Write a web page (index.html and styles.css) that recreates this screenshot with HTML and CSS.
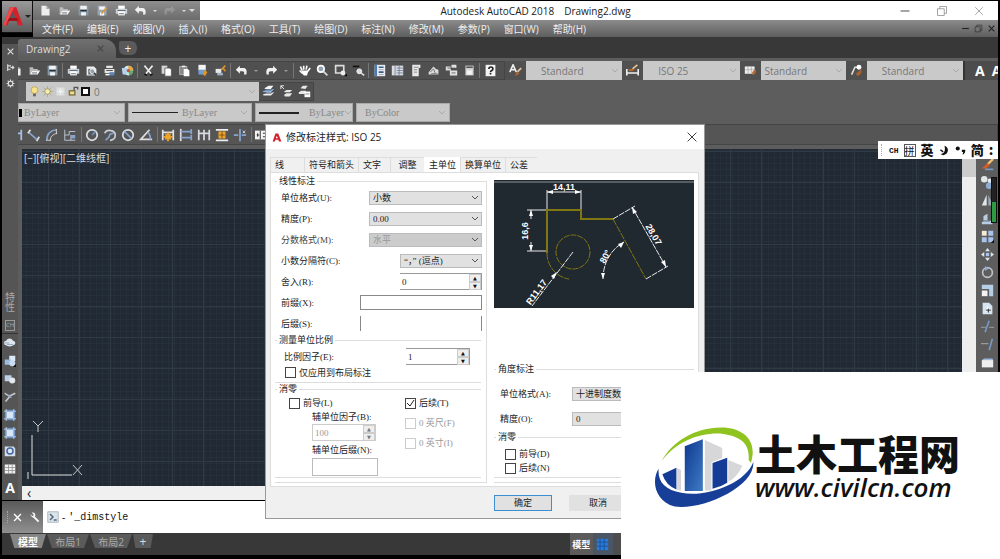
FILE: index.html
```html
<!DOCTYPE html>
<html lang="zh-CN">
<head>
    <meta charset="UTF-8">
    <meta name="viewport" content="width=device-width, initial-scale=1.0">
    <title>Autodesk AutoCAD 2018 Drawing2.dwg</title>
    <link rel="stylesheet" href="styles.css">
</head>
<body>

<!-- Icon set -->
<svg class="sprite" aria-hidden="true">
    <symbol id="new" viewBox="0 0 16 16"><path d="M3 2h6l4 4v8H3z" fill="#eee"/><path d="M9 2v4h4" fill="#aaa"/></symbol>
    <symbol id="open" viewBox="0 0 16 16"><path d="M2 4h4l1 2h5v2H5l-3 5z" fill="#bbb"/><path d="M5 8h10l-3 5H2z" fill="#f0f0f0"/><path d="M5 11h6" stroke="#4c5a66"/></symbol>
    <symbol id="save" viewBox="0 0 16 16"><path d="M2 2h12v12H2z" fill="#8798a8"/><path d="M4 2h8v5H4zM5 10h6v4H5z" fill="#f2f2f2"/><path d="M4 8h8" stroke="#28323c" stroke-width="2"/></symbol>
    <symbol id="saveas" viewBox="0 0 16 16"><path d="M2 2h11v12H2z" fill="#9ba6b2"/><path d="M4 3h7v4H4zM5 10h5v4H5z" fill="#f5f5f5"/><path d="M14 5l-6 7-2 1 1-3 5-6z" fill="#d99a3c"/></symbol>
    <symbol id="print" viewBox="0 0 16 16"><path d="M4 2h8v4H4z" fill="#fff"/><path d="M1 6h14v6H1z" fill="#ccd2d8"/><path d="M4 9h8v5H4z" fill="#fff"/><path d="M3 8h10M5 12h6" stroke="#475560"/></symbol>
    <symbol id="preview" viewBox="0 0 16 16"><path d="M2 3h9l3 3v8H2z" fill="#eee"/><path d="M4 6h7v7H4z" fill="#667078"/><circle cx="9" cy="9" r="3" fill="#8fa0ae" stroke="#fff"/><path d="M11 11l3 3" stroke="#333" stroke-width="2"/></symbol>
    <symbol id="publish" viewBox="0 0 16 16"><path d="M4 2h8v3H4zM2 6h12v5H2z" fill="#e6e6e6"/><path d="M4 8h8" stroke="#333"/><path d="M8 10h6v4H8z" fill="#6389b8"/><path d="M3 12h5v2H3z" fill="#fff"/></symbol>
    <symbol id="web" viewBox="0 0 16 16"><circle cx="9" cy="8" r="6" fill="#dbe9f5"/><path d="M9 2a6 6 0 0 1 6 6H9z" fill="#e6a83d"/><path d="M9 8h6a6 6 0 0 1-5 6z" fill="#5bab65"/><path d="M1 5h7v8H2z" fill="#b3d3ec"/><circle cx="9" cy="8" r="2" fill="#c84b3a"/></symbol>
    <symbol id="cut" viewBox="0 0 16 16"><path d="M3 2l9 11M13 2L4 13" stroke="#e9e9e9" stroke-width="2"/><path d="M3 12l3 2M10 14l3-2" stroke="#111" stroke-width="2"/></symbol>
    <symbol id="copy" viewBox="0 0 16 16"><path d="M2 2h7v10H2z" fill="#d5d5d5"/><path d="M6 5h6l2 2v8H6z" fill="#fff" stroke="#555"/></symbol>
    <symbol id="paste" viewBox="0 0 16 16"><path d="M2 3h9v10H2z" fill="#888" stroke="#bbb"/><path d="M5 2h4v2H5z" fill="#eee"/><path d="M7 6h5l2 2v7H7z" fill="#fff"/></symbol>
    <symbol id="match" viewBox="0 0 16 16"><path d="M3 1h9v7H3z" fill="#f3f3f3"/><path d="M3 7h9v6H3z" fill="#6f9ed0"/><path d="M11 7l3 3-3 5-3-3z" fill="#e09428"/></symbol>
    <symbol id="block" viewBox="0 0 16 16"><path d="M2 6h7v5H2z" fill="#e8e8e8"/><path d="M4 11h7v3H4z" fill="#9fb2c5"/><path d="M9 7l5-5M11 5l3 4" stroke="#d98f2b" stroke-width="2"/></symbol>
    <symbol id="undo" viewBox="0 0 16 16"><path d="M1 7l5-5v3h4c4 0 5 3 4 8h-3c1-3 0-4-2-4H6v3z" fill="#f0f0f0"/></symbol>
    <symbol id="redo" viewBox="0 0 16 16"><path d="M15 7l-5-5v3H6c-4 0-5 3-4 8h3c-1-3 0-4 2-4h3v3z" fill="#f0f0f0"/></symbol>
    <symbol id="hand" viewBox="0 0 16 16"><path d="M5 8L3 3M7 7V2M10 7l1-5M12 9l3-4M2 8l4 4" stroke="#fff" stroke-width="2"/><path d="M4 8h9l-2 6H7z" fill="#fff"/></symbol>
    <symbol id="zoom" viewBox="0 0 16 16"><circle cx="6" cy="6" r="4" fill="#8fa3b5" stroke="#fff" stroke-width="2"/><path d="M9 9l5 5" stroke="#ddd" stroke-width="2"/></symbol>
    <symbol id="zoomwin" viewBox="0 0 16 16"><path d="M2 2h10v9H2z" fill="none" stroke="#ddd" stroke-width="2"/><circle cx="11" cy="11" r="3" fill="#e9eef2"/><path d="M13 15h3v-3z" fill="#000"/></symbol>
    <symbol id="zoomprev" viewBox="0 0 16 16"><path d="M1 3h8" stroke="#111" stroke-width="2"/><circle cx="9" cy="9" r="3" fill="#d5dde3" stroke="#fff"/><path d="M11 11l4 3" stroke="#ddd" stroke-width="2"/></symbol>
    <symbol id="props" viewBox="0 0 16 16"><path d="M2 1h13v14H2z" fill="#e8edf4"/><path d="M2 1h3v14H2z" fill="#4b79b6"/><path d="M7 4h6M7 10h6" stroke="#3b5a84" stroke-width="2"/><path d="M7 7h6M7 13h6" stroke="#999"/></symbol>
    <symbol id="center" viewBox="0 0 16 16"><path d="M1 2h14v12H1z" fill="#d9dde2"/><path d="M5 2v12M10 2v12M7 5h8M7 8h8M7 11h8" stroke="#6c7a90"/></symbol>
    <symbol id="palette" viewBox="0 0 16 16"><path d="M4 1h10v4h-2v10H4z" fill="#e8e8e8"/><path d="M6 4h6M6 7h4M6 10h4" stroke="#777"/></symbol>
    <symbol id="sheet" viewBox="0 0 16 16"><path d="M2 10l6-7 3 3 3 1v6H2z" fill="#ddd"/><path d="M4 10l4-4 2 5M5 12h8" stroke="#5a6066" fill="none"/></symbol>
    <symbol id="markup" viewBox="0 0 16 16"><path d="M1 3h6v5H1zM8 1h6v4H8zM6 8h9v6H6z" fill="#e2e2e2"/><path d="M3 5h10M8 11h5M4 8v4" stroke="#555"/></symbol>
    <symbol id="calc" viewBox="0 0 16 16"><path d="M3 2h10v12H3z" fill="#d6d6d6"/><path d="M4 4h8" stroke="#555" stroke-width="2"/><path d="M5 8h6v5H5z" fill="#f3f3f3"/></symbol>
    <symbol id="help" viewBox="0 0 16 16"><path d="M2 1h12v14H2z" fill="#f4f4f4"/><path d="M6 6c0-3 5-3 5 0 0 2-3 2-3 4M8 11v2" stroke="#222" stroke-width="2" fill="none"/></symbol>
    <symbol id="astyle" viewBox="0 0 16 16"><path d="M1 10L5 1l4 9M3 7h5" stroke="#eee" stroke-width="2" fill="none"/><path d="M15 5l-5 5" stroke="#e8c89a" stroke-width="2"/><path d="M10 9l3 3-6 3z" fill="#b4662a"/></symbol>
    <symbol id="dstyle" viewBox="0 0 16 16"><path d="M1 6v8M15 6v8M1 11h14" stroke="#eee" stroke-width="2"/><path d="M14 1L8 6" stroke="#e5c391" stroke-width="2"/><path d="M3 6h8l-3 3H4z" fill="#b4662a"/></symbol>
    <symbol id="tstyle" viewBox="0 0 16 16"><path d="M1 3h12v9H1z" fill="#f0f0f0"/><path d="M1 7h12M5 3v9M9 3v9" stroke="#aaa"/><path d="M14 6l-4 4 1 4 4-4z" fill="#b4662a"/></symbol>
    <symbol id="mstyle" viewBox="0 0 16 16"><path d="M2 13l4-9h4" stroke="#ddd" stroke-width="2" fill="none"/><circle cx="11" cy="4" r="3" fill="#fff"/><path d="M14 6l-7 6 3 3 4-4z" fill="#a9622f"/></symbol>
    <symbol id="bulb" viewBox="0 0 16 16"><circle cx="8" cy="6" r="5" fill="#f7e289" stroke="#b39b36"/><path d="M6 11h4v4H6z" fill="#666"/></symbol>
    <symbol id="sun" viewBox="0 0 16 16"><path d="M8 0v16M0 8h16M2 2l12 12M14 2L2 14" stroke="#a6a27a"/><circle cx="8" cy="8" r="4" fill="#f7edab" stroke="#8d8543"/></symbol>
    <symbol id="frost" viewBox="0 0 16 16"><path d="M2 2h12v12H2z" fill="#dcdcdc"/><path d="M8 3v10M3 8h10M5 5l6 6M11 5l-6 6" stroke="#f4f6f7"/></symbol>
    <symbol id="lock" viewBox="0 0 16 16"><path d="M1 6h10v8H1z" fill="#7d733b"/><path d="M3 8h6v4H3z" fill="#e9dd98"/><path d="M9 6V2h5v3" stroke="#555" fill="none" stroke-width="2"/></symbol>
    <symbol id="layers" viewBox="0 0 16 16"><path d="M1 12l5-3h9l-4 4H2z" fill="#eee"/><path d="M1 8l5-3h9l-4 4H2z" fill="#8fb2dd"/><path d="M3 4l5-3h6l-3 4H4z" fill="#f4f4f4"/><path d="M2 10h9l4-3M2 6h9l4-3" stroke="#3e4a5a" fill="none"/></symbol>
    <symbol id="layerprev" viewBox="0 0 16 16"><path d="M1 1l4 4M1 5V1h4" stroke="#fff" fill="none"/><path d="M5 8l3-2h7l-3 3H6zM5 12l3-2h7l-3 4H6z" fill="#e8e8e8"/></symbol>
    <symbol id="layerstate" viewBox="0 0 16 16"><path d="M1 9l3-2h6l-2 4H1zM3 4l3-3h6l-3 4z" fill="#e8e8e8"/><path d="M8 8h7v7H8z" fill="#fff"/><path d="M9 11h5" stroke="#777"/></symbol>
    <symbol id="dlinear" viewBox="0 0 16 16"><path d="M2 2v12M14 2v12M2 6h12" stroke="#a9bfe0" stroke-width="2"/></symbol>
    <symbol id="dalign" viewBox="0 0 16 16"><path d="M2 5l9 8" stroke="#86a3d0" stroke-width="2"/><path d="M4 2L1 6M14 10l-3 5" stroke="#ddd" stroke-width="2"/></symbol>
    <symbol id="darc" viewBox="0 0 16 16"><path d="M2 14C2 7 6 3 13 2" stroke="#86a3d0" stroke-width="2" fill="none"/><path d="M6 14c0-4 3-7 8-8M1 14h6M13 1v6" stroke="#ddd" fill="none"/></symbol>
    <symbol id="dord" viewBox="0 0 16 16"><path d="M2 2v12h12M2 8h5V4h7M9 8v6" stroke="#c6cfdd" stroke-width="1" fill="none"/><path d="M9 8h5v4H9z" fill="#86a3d0"/></symbol>
    <symbol id="dradius" viewBox="0 0 16 16"><circle cx="8" cy="8" r="6" fill="none" stroke="#d9dde2" stroke-width="2"/><path d="M8 8l4-4" stroke="#6f8fc2" stroke-width="2"/></symbol>
    <symbol id="djog" viewBox="0 0 16 16"><path d="M2 6c2-5 12-4 12 2 0 4-3 6-6 6" stroke="#c9ced6" stroke-width="2" fill="none"/><path d="M3 14l4-4 1-3 4-1" stroke="#86a3d0" stroke-width="2" fill="none"/></symbol>
    <symbol id="ddia" viewBox="0 0 16 16"><circle cx="8" cy="8" r="6" fill="none" stroke="#d9dde2" stroke-width="2"/><path d="M4 4l8 8" stroke="#86a3d0" stroke-width="2"/></symbol>
    <symbol id="dang" viewBox="0 0 16 16"><path d="M12 2L2 13h13" stroke="#ddd" stroke-width="2" fill="none"/><path d="M10 5c3 2 3 5 3 8" stroke="#86a3d0" stroke-width="2" fill="none"/></symbol>
    <symbol id="dquick" viewBox="0 0 16 16"><path d="M2 2v12M14 2v12M2 5h12" stroke="#e1e1e1" stroke-width="2"/><path d="M8 5v10M3 10h10M5 7l6 6M11 7l-6 6" stroke="#f0a528" stroke-width="2"/></symbol>
    <symbol id="dbase" viewBox="0 0 16 16"><path d="M2 1v14" stroke="#ddd" stroke-width="2"/><path d="M2 4h12M2 11h12M14 1v6M14 8v6" stroke="#86a3d0" stroke-width="2"/></symbol>
    <symbol id="dcont" viewBox="0 0 16 16"><path d="M2 2v12M8 2v12M14 2v12M2 6h12" stroke="#d6d9de" stroke-width="2"/></symbol>
    <symbol id="dspace" viewBox="0 0 16 16"><path d="M1 2h14M1 14h14" stroke="#eee" stroke-width="2"/><path d="M4 4h8v8H4z" fill="#f0a528"/><path d="M8 4v8M5 8h6" stroke="#744a10"/></symbol>
    <symbol id="dbreak" viewBox="0 0 16 16"><path d="M8 1v14M1 8h5M10 8h5" stroke="#86a3d0" stroke-width="2"/><path d="M11 3l3 3M14 3l-3 3" stroke="#ddd"/></symbol>
    <symbol id="dtol" viewBox="0 0 16 16"><path d="M0 3h16v10H0z" fill="#f3f3f3"/><path d="M6 3v10M2 8h3M3 6v4M9 6h6M9 10h6" stroke="#222"/></symbol>
    <symbol id="cloud" viewBox="0 0 16 16"><path d="M3 11a3 3 0 0 1 0-6c2-4 7-4 9 0 4 0 4 6 0 6-1 2-8 2-9 0z" fill="#dfe6ee"/><path d="M1 8h6M4 10h8" stroke="#7d97b8"/></symbol>
    <symbol id="cubes" viewBox="0 0 16 16"><path d="M7 1h8v7H7z" fill="#dbe8f5"/><path d="M1 6h8v7H1z" fill="#9bbbe0"/><circle cx="11" cy="11" r="4" fill="#c9dcf0"/><path d="M12 16h4v-4z" fill="#111"/></symbol>
    <symbol id="shapes" viewBox="0 0 16 16"><path d="M1 3h9v8H1z" fill="#bcd0e6"/><circle cx="11" cy="10" r="4" fill="#e4e8ec"/></symbol>
    <symbol id="spline" viewBox="0 0 16 16"><path d="M1 3l6 4 8-4M8 7l-6 7" stroke="#ccc" stroke-width="2" fill="none"/><path d="M5 5l5 4" stroke="#8da7ce" stroke-width="2"/></symbol>
    <symbol id="region" viewBox="0 0 16 16"><path d="M1 1h14v14H1z" fill="#5a86c4"/><path d="M4 4h8v8H4z" fill="#d7e5f5"/><path d="M3 0v16M13 0v16M0 3h16M0 13h16" stroke="#cfd9e6"/></symbol>
    <symbol id="donut" viewBox="0 0 16 16"><path d="M1 2h12l2 3v10H1z" fill="#d3deea"/><circle cx="8" cy="8" r="4" fill="#dce9f8" stroke="#4566a0" stroke-width="2"/></symbol>
    <symbol id="table" viewBox="0 0 16 16"><path d="M1 2h14v12H1z" fill="#f0f0f0"/><path d="M1 6h14M1 10h14M6 2v12M11 2v12" stroke="#8c8c8c"/></symbol>
    <symbol id="brush" viewBox="0 0 16 16"><path d="M15 1L8 8" stroke="#f1c172" stroke-width="3"/><path d="M8 6l3 3-5 4H1z" fill="#d65b28"/><path d="M5 14h10" stroke="#7d9dc6" stroke-width="2"/></symbol>
    <symbol id="cp" viewBox="0 0 16 16"><circle cx="4" cy="4" r="4" fill="#e3e7eb"/><circle cx="11" cy="6" r="3" fill="#dfe6ee"/><circle cx="10" cy="12" r="4" fill="#8eadd4"/></symbol>
    <symbol id="mirror" viewBox="0 0 16 16"><path d="M7 1v13H1z" fill="#e2e5e8"/><path d="M9 1v13h6z" fill="#9ba6b2"/></symbol>
    <symbol id="offset" viewBox="0 0 16 16"><path d="M3 12V5l5-3v8l6 1v4H1v-3z" fill="#b9cce4"/><path d="M3 11h8" stroke="#455"/></symbol>
    <symbol id="array" viewBox="0 0 16 16"><path d="M1 1h6v6H1z" fill="#f4ead5"/><path d="M9 1h6v6H9zM1 9h6v6H1zM9 9h6v6H9z" fill="#a9c4ec"/><path d="M12 16h4v-4z" fill="#111"/></symbol>
    <symbol id="move" viewBox="0 0 16 16"><path d="M8 0l3 4H5zM8 16l3-4H5zM0 8l4-3v6zM16 8l-4-3v6z" fill="#dde5ee"/><path d="M6 6h4v4H6z" fill="#a9c4ec"/></symbol>
    <symbol id="rotate" viewBox="0 0 16 16"><circle cx="8" cy="8" r="6" fill="none" stroke="#c0c4ca" stroke-width="2"/><path d="M5 0l5 3-5 3z" fill="#8faad4"/></symbol>
    <symbol id="scale" viewBox="0 0 16 16"><path d="M1 1h14v14h-5V6H1z" fill="#b6cfe9"/><path d="M1 8h7v7H1z" fill="#f3f3f3"/></symbol>
    <symbol id="stretch" viewBox="0 0 16 16"><path d="M2 1h8l4 4v10H2z" fill="#d7e4f2"/><path d="M5 13l3-8 3 4" fill="#fff"/><path d="M6 10h6M9 8v5" stroke="#111"/></symbol>
    <symbol id="trim" viewBox="0 0 16 16"><path d="M0 9h6M10 9h6" stroke="#aaa"/><path d="M10 1L5 15" stroke="#7998c5" stroke-width="2"/></symbol>
    <symbol id="extend" viewBox="0 0 16 16"><path d="M0 7h9" stroke="#bbb"/><path d="M14 1l-4 14" stroke="#7998c5" stroke-width="2"/></symbol>
    <symbol id="box" viewBox="0 0 16 16"><path d="M1 5h14v9H1z" fill="#eee"/><path d="M1 5l3-2h10l1 2z" fill="#9bb8dd"/></symbol>
    <symbol id="close" viewBox="0 0 16 16"><path d="M3 3l10 10M13 3L3 13" stroke="currentColor" stroke-width="2"/></symbol>
    <symbol id="closethin" viewBox="0 0 16 16"><path d="M3 3l10 10M13 3L3 13" stroke="currentColor"/></symbol>
    <symbol id="pin" viewBox="0 0 16 16"><path d="M3 2v12M3 5h6M3 11h5M8 8h6M11 5l3 3-3 3" stroke="#ddd" stroke-width="2" fill="none"/></symbol>
    <symbol id="gear" viewBox="0 0 16 16"><circle cx="8" cy="8" r="4" fill="none" stroke="#ddd" stroke-width="2"/><path d="M8 1v3M8 12v3M1 8h3M12 8h3M3 3l2 2M11 11l2 2M13 3l-2 2M5 11l-2 2" stroke="#ddd" stroke-width="2"/></symbol>
    <symbol id="min" viewBox="0 0 16 16"><path d="M2 8h12" stroke="currentColor" stroke-width="2"/></symbol>
    <symbol id="restore" viewBox="0 0 16 16"><path d="M2 5h9v9H2zM5 5V2h9v9h-3" stroke="currentColor" fill="none"/></symbol>
    <symbol id="wrench" viewBox="0 0 16 16"><path d="M6 6l8 8" stroke="#f2f2f2" stroke-width="3"/><path d="M2 3l3 3 2-2-3-3c4-1 6 2 5 5S3 9 2 3z" fill="#f2f2f2"/></symbol>
    <symbol id="prompt" viewBox="0 0 16 16"><path d="M1 1h14v14H1z" fill="#dce3ea" stroke="#9aa6b2"/><path d="M4 4l4 4-4 4M9 12h4" stroke="#56687a" stroke-width="2" fill="none"/></symbol>
    <symbol id="gridon" viewBox="0 0 16 16"><path d="M1 1h14v14H1z" fill="#2b7ad6"/><path d="M1 5h14M1 10h14M5 1v14M10 1v14" stroke="#174c90"/></symbol>
    <symbol id="acad" viewBox="0 0 32 32"><path d="M2 28L11 3h9l9 25h-7l-2-6H10l-2 6z" fill="#d3222b"/><path d="M15 9l-4 9h8z" fill="#55585c"/><path d="M2 28l8-6h13l-2-4H9z" fill="#9d1119"/><path d="M11 3h6L5 28H2z" fill="#ee4a4b"/></symbol>
    <symbol id="acadmark" viewBox="0 0 32 32"><path d="M2 29L11 3h9l10 26h-8l-2-6H11l-2 6z" fill="#d3222b"/><path d="M15 10l-3 8h7z" fill="#fff"/></symbol>
</svg>

<div class="app">
    <header class="top">
        <button class="app-btn" aria-label="应用程序菜单"><svg><use href="#acad"/></svg><i class="caret"></i></button>
        <div class="top-rows">
            <div class="title-row">
                <div class="quick">
                    <button aria-label="新建"><svg><use href="#new"/></svg></button>
                    <button aria-label="打开"><svg><use href="#open"/></svg></button>
                    <button aria-label="保存"><svg><use href="#save"/></svg></button>
                    <button aria-label="另存为"><svg><use href="#saveas"/></svg></button>
                    <button aria-label="打印"><svg><use href="#print"/></svg></button>
                    <button aria-label="放弃"><svg><use href="#undo"/></svg></button>
                    <i class="caret light"></i>
                    <button class="dim" aria-label="重做"><svg><use href="#redo"/></svg></button>
                    <i class="caret light"></i>
                    <i class="caret light big"></i>
                </div>
                <div class="title"><span>Autodesk AutoCAD 2018</span><span>Drawing2.dwg</span></div>
                <div class="win-btns">
                    <button aria-label="最小化"><svg><use href="#min"/></svg></button>
                    <button aria-label="还原"><svg><use href="#restore"/></svg></button>
                    <button aria-label="关闭"><svg><use href="#closethin"/></svg></button>
                </div>
            </div>
            <nav class="menu">
                <a href="#">文件(F)</a><a href="#">编辑(E)</a><a href="#">视图(V)</a><a href="#">插入(I)</a><a href="#">格式(O)</a><a href="#">工具(T)</a><a href="#">绘图(D)</a><a href="#">标注(N)</a><a href="#">修改(M)</a><a href="#">参数(P)</a><a href="#">窗口(W)</a><a href="#">帮助(H)</a>
                <span class="doc-btns">
                    <button aria-label="最小化图形"><svg><use href="#min"/></svg></button>
                    <button aria-label="还原图形"><svg><use href="#restore"/></svg></button>
                    <button aria-label="关闭图形"><svg><use href="#close"/></svg></button>
                </span>
            </nav>
        </div>
    </header>

    <div class="main">
        <aside class="side">
            <div class="side-palette">
                <button aria-label="关闭"><svg><use href="#close"/></svg></button>
                <button aria-label="自动隐藏"><svg><use href="#pin"/></svg></button>
                <button aria-label="特性"><svg><use href="#gear"/></svg></button>
                <span class="side-title">特性</span>
                <span class="side-box">CH</span>
            </div>
            <div class="side-tools">
                <button aria-label="修订云线"><svg><use href="#cloud"/></svg></button>
                <button aria-label="插入块"><svg><use href="#cubes"/></svg></button>
                <button aria-label="创建块"><svg><use href="#shapes"/></svg></button>
                <button aria-label="点"><svg><use href="#spline"/></svg></button>
                <button aria-label="图案填充"><svg><use href="#region"/></svg></button>
                <button aria-label="渐变色"><svg><use href="#region"/></svg></button>
                <button aria-label="面域"><svg><use href="#donut"/></svg></button>
                <button aria-label="表格"><svg><use href="#table"/></svg></button>
                <button class="letter" aria-label="多行文字">A</button>
            </div>
        </aside>

        <div class="center">
            <div class="file-tabs">
                <button class="file-tab">Drawing2 <svg><use href="#close"/></svg></button>
                <button class="file-add" aria-label="新图形">+</button>
            </div>

            <div class="bars">
                <div class="bar standard">
                    <div class="tools first">
                        <button class="half" aria-label="新建"><svg><use href="#new"/></svg></button>
                        <button aria-label="打开"><svg><use href="#open"/></svg></button>
                        <button aria-label="保存"><svg><use href="#save"/></svg></button>
                        <i class="sep"></i>
                        <button aria-label="打印"><svg><use href="#print"/></svg></button>
                        <button aria-label="打印预览"><svg><use href="#preview"/></svg></button>
                        <button aria-label="发布"><svg><use href="#publish"/></svg></button>
                        <button aria-label="三维 DWF"><svg><use href="#web"/></svg></button>
                        <i class="sep"></i>
                        <button aria-label="剪切"><svg><use href="#cut"/></svg></button>
                        <button aria-label="复制"><svg><use href="#copy"/></svg></button>
                        <button aria-label="粘贴"><svg><use href="#paste"/></svg></button>
                        <button aria-label="特性匹配"><svg><use href="#match"/></svg></button>
                        <button aria-label="块编辑器"><svg><use href="#block"/></svg></button>
                        <i class="sep"></i>
                        <button aria-label="放弃"><svg><use href="#undo"/></svg></button>
                        <i class="caret dark"></i>
                        <button aria-label="重做"><svg><use href="#redo"/></svg></button>
                        <i class="caret dark"></i>
                        <i class="sep"></i>
                        <button aria-label="平移"><svg><use href="#hand"/></svg></button>
                        <button aria-label="缩放"><svg><use href="#zoom"/></svg></button>
                        <button aria-label="窗口缩放"><svg><use href="#zoomwin"/></svg></button>
                        <button aria-label="上一个"><svg><use href="#zoomprev"/></svg></button>
                        <i class="sep"></i>
                        <button aria-label="特性"><svg><use href="#props"/></svg></button>
                        <button aria-label="设计中心"><svg><use href="#center"/></svg></button>
                        <button aria-label="工具选项板"><svg><use href="#palette"/></svg></button>
                        <button aria-label="图纸集"><svg><use href="#sheet"/></svg></button>
                        <button aria-label="标记集"><svg><use href="#markup"/></svg></button>
                        <button aria-label="计算器"><svg><use href="#calc"/></svg></button>
                        <i class="sep"></i>
                        <button aria-label="帮助"><svg><use href="#help"/></svg></button>
                    </div>
                    <div class="styles">
                        <button aria-label="文字样式"><svg><use href="#astyle"/></svg></button>
                        <select class="combo" aria-label="文字样式"><option>Standard</option></select>
                        <button aria-label="标注样式"><svg><use href="#dstyle"/></svg></button>
                        <select class="combo" aria-label="标注样式"><option>ISO 25</option></select>
                        <button aria-label="表格样式"><svg><use href="#tstyle"/></svg></button>
                        <select class="combo near" aria-label="表格样式"><option>Standard</option></select>
                        <button aria-label="多重引线样式"><svg><use href="#mstyle"/></svg></button>
                        <select class="combo" aria-label="多重引线样式"><option>Standard</option></select>
                    </div>
                    <div class="letters"><button aria-label="多行文字">A</button><button aria-label="单行文字">A</button></div>
                </div>

                <div class="bar layer">
                    <div class="layer-combo">
                        <svg><use href="#bulb"/></svg><svg><use href="#sun"/></svg><svg><use href="#frost"/></svg><svg><use href="#lock"/></svg>
                        <i class="swatch"></i>
                        <select class="combo" aria-label="图层"><option>0</option></select>
                    </div>
                    <div class="tools">
                        <button aria-label="图层特性"><svg><use href="#layers"/></svg></button>
                        <button aria-label="上一个图层"><svg><use href="#layerprev"/></svg></button>
                        <button aria-label="图层状态"><svg><use href="#layerstate"/></svg></button>
                    </div>
                </div>

                <div class="bar by">
                    <div class="by-cell by-color"><i class="chip"></i><select class="combo" aria-label="颜色"><option>ByLayer</option></select></div>
                    <div class="by-cell by-line"><i class="line"></i><select class="combo" aria-label="线型"><option>ByLayer</option></select></div>
                    <div class="by-cell by-weight"><i class="line thick"></i><select class="combo" aria-label="线宽"><option>ByLayer</option></select></div>
                    <div class="by-cell by-plot"><select class="combo" aria-label="打印样式" disabled><option>ByColor</option></select></div>
                </div>

                <div class="bar dims">
                    <div class="tools">
                        <button class="half" aria-label="线性"><svg><use href="#dlinear"/></svg></button>
                        <button aria-label="对齐"><svg><use href="#dalign"/></svg></button>
                        <button aria-label="弧长"><svg><use href="#darc"/></svg></button>
                        <button aria-label="坐标"><svg><use href="#dord"/></svg></button>
                        <i class="sep"></i>
                        <button aria-label="半径"><svg><use href="#dradius"/></svg></button>
                        <button aria-label="折弯"><svg><use href="#djog"/></svg></button>
                        <button aria-label="直径"><svg><use href="#ddia"/></svg></button>
                        <button aria-label="角度"><svg><use href="#dang"/></svg></button>
                        <i class="sep"></i>
                        <button aria-label="快速标注"><svg><use href="#dquick"/></svg></button>
                        <button aria-label="基线"><svg><use href="#dbase"/></svg></button>
                        <button aria-label="连续"><svg><use href="#dcont"/></svg></button>
                        <button aria-label="等距标注"><svg><use href="#dspace"/></svg></button>
                        <button aria-label="折断标注"><svg><use href="#dbreak"/></svg></button>
                        <i class="sep"></i>
                        <button aria-label="公差"><svg><use href="#dtol"/></svg></button>
                    </div>
                </div>
            </div>

            <div class="work">
                <div class="view">
                    <div class="canvas">
                        <p class="view-label">[−][俯视][二维线框]</p>
                        <svg class="ucs" viewBox="0 0 60 64"><path d="M7 20v40h40M3 57v7" stroke="#ddd" fill="none"/><path d="M8 6l5 5 5-5M13 11v6M48 50l9 10M57 50l-9 10" stroke="#c5c5c5" fill="none"/></svg>
                    </div>
                    <div class="hscroll"><button aria-label="向左滚动">‹</button></div>
                </div>
                <div class="vscroll"><i></i></div>
                <div class="edit-tools">
                    <button aria-label="删除"><svg><use href="#brush"/></svg></button>
                    <button aria-label="复制"><svg><use href="#cp"/></svg></button>
                    <button aria-label="镜像"><svg><use href="#mirror"/></svg></button>
                    <button aria-label="偏移"><svg><use href="#offset"/></svg></button>
                    <button aria-label="阵列"><svg><use href="#array"/></svg></button>
                    <button aria-label="移动"><svg><use href="#move"/></svg></button>
                    <button aria-label="旋转"><svg><use href="#rotate"/></svg></button>
                    <button aria-label="缩放"><svg><use href="#scale"/></svg></button>
                    <button aria-label="拉伸"><svg><use href="#stretch"/></svg></button>
                    <button aria-label="修剪"><svg><use href="#trim"/></svg></button>
                    <button aria-label="延伸"><svg><use href="#extend"/></svg></button>
                    <button aria-label="打断"><svg><use href="#box"/></svg></button>
                    <div class="meter"></div>
                </div>
            </div>
        </div>
    </div>

    <div class="command">
        <div class="command-side">
            <i class="grip"></i>
            <button aria-label="关闭命令行"><svg><use href="#close"/></svg></button>
            <button aria-label="自定义"><svg><use href="#wrench"/></svg></button>
        </div>
        <svg class="prompt"><use href="#prompt"/></svg>
        <span class="dash">-</span>
        <input type="text" aria-label="命令" value="'_dimstyle">
    </div>

    <footer class="bottom">
        <div class="layouts">
            <button class="active">模型</button>
            <button>布局1</button>
            <button>布局2</button>
            <button class="plus" aria-label="新建布局">+</button>
        </div>
        <div class="status">
            <button>模型</button>
            <button class="on" aria-label="栅格"><svg><use href="#gridon"/></svg></button>
        </div>
    </footer>
</div>

<!-- Input method bar -->
<div class="ime">
    <i class="grip"></i>
    <span class="ime-lang">CH</span>
    <span class="ime-py">拼</span>
    <b>英</b>
    <svg viewBox="0 0 16 16"><path d="M8 1c7 2 7 12-2 14l-4-2c5 0 8-4 6-12z" fill="#111"/><path d="M2 7l4 3" stroke="#111" stroke-width="2"/></svg>
    <svg viewBox="0 0 16 16"><circle cx="4" cy="5" r="3" fill="#111"/><path d="M10 7h5c0 4-1 6-4 7l1-4h-2z" fill="#111"/></svg>
    <b>简</b>
    <b>:</b>
</div>

<!-- Modify dimension style -->
<div class="dialog" role="dialog" aria-label="修改标注样式: ISO 25">
    <div class="dialog-title">
        <svg><use href="#acadmark"/></svg>
        <span>修改标注样式: ISO 25</span>
        <button aria-label="关闭"><svg><use href="#closethin"/></svg></button>
    </div>
    <div class="dialog-tabs">
        <button class="w1">线</button>
        <button>符号和箭头</button>
        <button class="w2">文字</button>
        <button class="w3">调整</button>
        <button class="active">主单位</button>
        <button>换算单位</button>
        <button class="w2">公差</button>
    </div>
    <div class="panel">
        <fieldset class="group linear">
            <legend>线性标注</legend>
            <div class="row"><label for="unit">单位格式(U):</label><select id="unit"><option>小数</option></select></div>
            <div class="row"><label for="prec">精度(P):</label><select id="prec"><option>0.00</option></select></div>
            <div class="row off"><label for="frac">分数格式(M):</label><select id="frac" disabled><option>水平</option></select></div>
            <div class="row short"><label for="deci">小数分隔符(C):</label><select id="deci"><option>“，”  (逗点)</option></select></div>
            <div class="row short"><label for="round">舍入(R):</label>
                <span class="spin"><input type="text" id="round" value="0"><span><button aria-label="增加">▲</button><button aria-label="减少">▼</button></span></span></div>
            <div class="row long"><label for="prefix">前缀(X):</label><input type="text" id="prefix"></div>
            <div class="row long"><label for="suffix">后缀(S):</label><input type="text" id="suffix" class="sides"></div>

            <fieldset class="sub">
                <legend>测量单位比例</legend>
                <div class="row scale"><label for="factor">比例因子(E):</label>
                    <span class="spin"><input type="text" id="factor" value="1"><span><button aria-label="增加">▲</button><button aria-label="减少">▼</button></span></span></div>
                <label class="check tight"><input type="checkbox">仅应用到布局标注</label>
            </fieldset>

            <fieldset class="sub zero">
                <legend>消零</legend>
                <div class="zero-cols">
                    <div class="zero-left">
                        <label class="check"><input type="checkbox">前导(L)</label>
                        <div class="sub-field">
                            <label for="subf">辅单位因子(B):</label>
                            <span class="spin off"><input type="text" id="subf" value="100" disabled><span><button disabled aria-label="增加">▲</button><button disabled aria-label="减少">▼</button></span></span>
                            <label for="subs">辅单位后缀(N):</label>
                            <input type="text" id="subs" disabled>
                        </div>
                    </div>
                    <div class="zero-right">
                        <label class="check"><input type="checkbox" checked>后续(T)</label>
                        <label class="check off"><input type="checkbox" disabled>0 英尺(F)</label>
                        <label class="check off"><input type="checkbox" disabled>0 英寸(I)</label>
                    </div>
                </div>
            </fieldset>
        </fieldset>

        <div class="right-col">
            <svg class="preview" viewBox="0 0 200 128">
                <path d="M0 2h200" stroke="#8c9196"/>
                <g fill="none" stroke="#807712">
                    <path d="M53 73V30h34v9h32" stroke-width="2"/>
                    <path d="M119 39l33 60M53 73a26 26 0 0 0 22 26" stroke-dasharray="7 1"/>
                    <circle cx="79" cy="72" r="17" stroke-dasharray="6 1"/>
                </g>
                <g fill="none" stroke="#e8e8e8">
                    <path d="M53 29V10M87 29V10M53 12h34M33 30h19M33 71h19M37 30v9M37 62v9"/>
                    <path d="M79 72l-41 54M119 39l22-13M152 99l22-13M138 27l34 60M109 99c0-16 8-30 21-37" stroke-dasharray="6 1"/>
                </g>
                <path d="M53 12l6-2v4zM87 12l-6-2v4zM37 30l2 6h-4zM37 71l2-6h-4zM63 92l-6 4 3 3zM138 27l5 5-4 2zM172 87l-5-5 4-2zM109 99l-2-6h4zM130 62l-6 2 3 4z" fill="#fff"/>
                <g class="dim-text">
                    <text x="70" y="10">14,11</text>
                    <text transform="translate(34 51) rotate(-90)">16,6</text>
                    <text transform="translate(157 56) rotate(60)">28,07</text>
                    <text transform="translate(114 78) rotate(-62)">80°</text>
                    <text transform="translate(45 114) rotate(-53)">R11,17</text>
                </g>
            </svg>
            <fieldset class="group angle">
                <legend>角度标注</legend>
                <div class="row"><label for="aunit">单位格式(A):</label><select id="aunit"><option>十进制度数</option></select></div>
                <div class="row"><label for="aprec">精度(O):</label><select id="aprec"><option>0</option></select></div>
                <fieldset class="sub">
                    <legend>消零</legend>
                    <label class="check"><input type="checkbox">前导(D)</label>
                    <label class="check"><input type="checkbox">后续(N)</label>
                </fieldset>
            </fieldset>
        </div>
    </div>
    <div class="dialog-foot">
        <button class="primary">确定</button>
        <button>取消</button>
        <button>帮助</button>
    </div>
</div>

<!-- Site mark -->
<div class="mark">
    <svg viewBox="25 35 305 250">
        <defs><linearGradient id="tower" x2="1" y2="1"><stop offset="0" stop-color="#0e3790"/><stop offset="1" stop-color="#3f7cc4"/></linearGradient></defs>
        <path d="M51 146C80 85 160 40 240 45c70 7 95 50 78 105l-7-8c4-47-21-70-76-78-65-6-140 21-184 82z" fill="#8fc31f"/>
        <path d="M42 168c-22 32-14 97 48 113 80 12 240-58 235-133-25 67-145 107-215 92-50-8-72-35-68-72z" fill="#173f97"/>
        <path d="M97 166l12 6v62l-12-3zM180 82l52 24v30l-32 13v84h-20zM250 142l42 17q-14 34-42 48z" fill="#d7d7d9"/>
        <path d="M53 185l42-20v65q-32-12-42-45zM203 151l44-16v75q-18 12-44 18z" fill="#143b96"/>
        <path d="M120 101l54-21v155h-54z" fill="url(#tower)"/>
    </svg>
    <div class="mark-text">
        <strong>土木工程网</strong>
        <em>www.civilcn.com</em>
    </div>
</div>

</body>
</html>
```

FILE: styles.css
```css
* {
    box-sizing: border-box;
}
body {
    margin: 0;
    background: #000;
    font-family: "Open Sans", "Noto Sans CJK SC", sans-serif;
    font-size: 10px;
    overflow: hidden;
}
button, select, input {
    font: inherit;
    color: inherit;
    margin: 0;
    padding: 0;
    border: none;
    background: none;
    border-radius: 0;
}
button {
    display: flex;
    align-items: center;
    justify-content: center;
    flex: none;
}
select {
    appearance: none;
    min-width: 0;
}
svg {
    width: 13px;
    height: 13px;
    flex: none;
}
.sprite {
    position: absolute;
    width: 0;
    height: 0;
}
.app {
    height: 100vh;
    padding: 1px 2px 4px;
    display: flex;
    flex-direction: column;
}
.caret {
    border: 3px solid transparent;
    border-top-color: #222;
    border-bottom: none;
    flex: none;
}
.caret.light {
    border-width: 2px;
    border-top-color: #ddd;
    border-bottom: none;
    margin: 0 3px;
}
.caret.light.big {
    border-width: 3px;
    border-bottom: none;
    margin: 0;
}
.caret.dark {
    border-width: 2px;
    border-top-color: #999;
    border-bottom: none;
    margin: 0 4px;
}

/* Title and menu */
.top {
    display: flex;
    flex: none;
}
.app-btn {
    width: 31px;
    height: 32px;
    background: linear-gradient(#9a9a9a, #5c5c5c);
    border-right: 1px solid #111;
    border-bottom: 1px solid #111;
    justify-content: flex-start;
}
.app-btn svg {
    width: 23px;
    height: 25px;
}
.top-rows {
    flex: 1;
}
.title-row {
    display: flex;
    height: 19px;
    background: #fff;
}
.quick {
    display: flex;
    align-items: center;
    width: 167px;
    background: linear-gradient(#8e8e8e, #6c6c6c);
    padding-left: 3px;
}
.quick button {
    width: 19px;
}
.quick .dim {
    opacity: 0.2;
}
.title {
    flex: 1;
    display: flex;
    justify-content: center;
    align-items: center;
    gap: 10px;
    padding-right: 28px;
    color: #222;
}
.win-btns {
    display: flex;
    gap: 25px;
    padding-right: 13px;
    color: #888;
}
.win-btns svg {
    width: 12px;
    height: 12px;
}
.menu {
    display: flex;
    align-items: center;
    gap: 14px;
    height: 17px;
    padding-left: 9px;
    background: linear-gradient(#8b8b8b, #5e5e5e);
}
.menu a {
    color: #eee;
    text-decoration: none;
}
.doc-btns {
    display: flex;
    gap: 4px;
    margin-left: auto;
    padding-right: 2px;
    color: #222;
}
.doc-btns svg {
    width: 9px;
    height: 9px;
}

/* Left strip */
.main {
    flex: 1;
    display: flex;
    min-height: 0;
    background: #383838;
}
.side {
    width: 16px;
    margin-top: 7px;
    padding-bottom: 4px;
    display: flex;
    flex-direction: column;
    background: #555;
    color: #ddd;
}
.side-palette {
    flex: 1;
    display: flex;
    flex-direction: column;
    align-items: center;
    gap: 4px;
    padding-top: 1px;
    border-bottom: 1px solid #333;
}
.side-palette svg {
    width: 9px;
    height: 9px;
}
.side-palette button {
    height: 12px;
    width: 16px;
}
.side-title {
    margin-top: auto;
    margin-bottom: 4px;
    writing-mode: vertical-rl;
    color: #aaa;
}
.side-box {
    border: 1px solid #999;
    font-size: 6px;
    line-height: 9px;
    color: #aaa;
    margin-bottom: 2px;
}
.side-tools button {
    width: 16px;
    height: 18px;
}
.side-tools svg {
    width: 12px;
    height: 12px;
}
.side-tools .letter {
    font: bold 14px "Open Sans", sans-serif;
    color: #fff;
}

/* Document tabs */
.center {
    flex: 1;
    min-width: 0;
    display: flex;
    flex-direction: column;
}
.file-tabs {
    display: flex;
    height: 21px;
    padding-top: 2px;
    gap: 3px;
    flex: none;
}
.file-tab {
    width: 98px;
    justify-content: space-between;
    padding: 0 11px 0 8px;
    background: linear-gradient(#707070, #5c5c5c);
    border-radius: 3px 12px 0 0;
    color: #ddd;
}
.file-tab svg {
    width: 9px;
    height: 9px;
    color: #444;
}
.file-add {
    width: 18px;
    height: 14px;
    margin-top: 2px;
    background: #5a5a5a;
    border-radius: 2px 6px 6px 6px;
    color: #eee;
    font-size: 12px;
}

/* Toolbars */
.bars {
    display: flex;
    flex-direction: column;
    gap: 2px;
    padding: 3px 0 4px;
    background: #5d5d5d;
    flex: none;
}
.bar {
    display: flex;
    height: 19px;
}
.tools {
    display: flex;
    align-items: center;
    background: #505050;
    border: 1px solid #454545;
    border-left: none;
}
.tools button {
    width: 18px;
    height: 17px;
}
.tools .half {
    width: 7px;
    overflow: hidden;
    justify-content: flex-end;
    padding-right: 2px;
}
.standard .tools {
    width: 487px;
}
.sep {
    width: 1px;
    height: 15px;
    background: #777;
    margin: 0 1px;
}
.styles {
    display: flex;
    width: 458px;
}
.styles button {
    width: 21px;
    background: #505050;
}
.combo {
    flex: 1;
    padding: 0 12px 0 15px;
    color: #777;
    background: #c9c9c9 url("data:image/svg+xml,%3Csvg xmlns='http://www.w3.org/2000/svg' width='6' height='4'%3E%3Cpath d='M0 0l3 3 3-3' fill='none' stroke='%23aaa'/%3E%3C/svg%3E") no-repeat right 4px center;
}
.combo.near {
    padding-left: 4px;
}
.letters {
    flex: 1;
    display: flex;
    gap: 7px;
    padding-left: 10px;
    background: #4c4c4c;
    border-left: 2px solid #333;
    overflow: hidden;
    color: #fff;
    font: bold 14px "Open Sans", sans-serif;
}
.layer-combo {
    display: flex;
    align-items: center;
    gap: 2px;
    width: 233px;
    margin-left: 8px;
    padding-left: 3px;
    background: #c9c9c9;
}
.layer-combo svg {
    width: 11px;
    height: 11px;
}
.layer-combo .combo {
    padding-left: 2px;
}
.swatch {
    width: 9px;
    height: 9px;
    border: 2px solid #111;
    background: #fff;
}
.by {
    gap: 3px;
    font-family: "Liberation Serif", serif;
}
.by-cell {
    display: flex;
    align-items: center;
    background: #c9c9c9;
    border: 1px solid #aaa;
}
.by-cell .combo {
    padding-left: 2px;
    color: #888;
}
.by-color {
    width: 107px;
}
.by-line {
    width: 124px;
}
.by-weight {
    width: 98px;
}
.by-weight .combo {
    padding-right: 0;
    background-position: right 1px center;
}
.by-plot {
    width: 94px;
}
.by-plot .combo {
    padding-left: 8px;
    opacity: 1;
}
.chip {
    width: 3px;
    height: 8px;
    background: #000;
}
.line {
    width: 46px;
    margin: 0 2px 0 3px;
    height: 1px;
    background: #222;
}
.line.thick {
    width: 40px;
    margin-right: 8px;
    height: 2px;
}
.dims {
    height: 21px;
}
.dims .tools {
    width: 100%;
    background: #555;
}
.dims svg {
    width: 14px;
    height: 14px;
}
.dims .sep {
    margin-left: 2px;
}

/* Drawing area */
.work {
    flex: 1;
    display: flex;
    min-height: 0;
    background: #5d5d5d;
    padding-left: 4px;
}
.view {
    flex: 1;
    display: flex;
    flex-direction: column;
}
.canvas {
    flex: 1;
    display: flex;
    flex-direction: column;
    justify-content: space-between;
    background-color: #212a34;
    background-image:
        linear-gradient(#303a45 1px, transparent 1px),
        linear-gradient(90deg, #303a45 1px, transparent 1px),
        repeating-linear-gradient(#26303b 0 1px, transparent 1px 6px),
        repeating-linear-gradient(90deg, #26303b 0 1px, transparent 1px 6px);
    background-size: 31px 31px, 31px 31px, auto, auto;
    background-position: 26px 2px;
}
.view-label {
    margin: 2px 0 0 2px;
    line-height: 14px;
    color: #ddd;
}
.ucs {
    width: 60px;
    height: 64px;
    margin: 0 0 7px 3px;
}
.hscroll {
    height: 14px;
    background: #f0f0f0;
}
.hscroll button {
    width: 14px;
    height: 12px;
    font-size: 14px;
    color: #222;
}
.vscroll {
    width: 14px;
    background: #eee;
}
.vscroll i {
    display: block;
    height: 28px;
    background: #ccc;
}
.edit-tools {
    width: 22px;
    padding: 6px 0 0 1px;
    position: relative;
}
.edit-tools button {
    width: 20px;
    height: 18px;
}
.meter {
    position: absolute;
    top: 28px;
    right: 1px;
    width: 6px;
    height: 46px;
    border: 1px solid #111;
    background: linear-gradient(#222 55%, #2d9b41 55%);
}

/* Command line */
.command {
    display: flex;
    align-items: center;
    height: 32px;
    flex: none;
    margin-top: 1px;
    background: #fff;
}
.command-side {
    display: flex;
    align-items: center;
    gap: 1px;
    width: 41px;
    height: 32px;
    padding-left: 5px;
    background: linear-gradient(#5a5a5a, #909090);
    color: #fff;
}
.command-side button {
    width: 16px;
}
.command-side svg {
    width: 11px;
    height: 11px;
}
.grip {
    width: 1px;
    height: 12px;
    border-left: 1px dotted #aaa;
}
.prompt {
    width: 12px;
    height: 12px;
    margin-left: 4px;
}
.dash {
    margin: 0 3px;
}
.command input {
    flex: 1;
    height: 20px;
    font-family: "Liberation Mono", monospace;
    color: #111;
}

/* Layout tabs and status */
.bottom {
    display: flex;
    height: 22px;
    flex: none;
    background: #383838;
}
.layouts {
    flex: 1;
    display: flex;
    align-items: flex-start;
    gap: 1px;
    padding: 1px 0 0 8px;
}
.layouts button {
    height: 14px;
    width: 42px;
    background: #5a5a5a;
    color: #aaa;
    clip-path: polygon(0 0, 100% 0, 88% 100%, 12% 100%);
}
.layouts .active {
    width: 36px;
    background: #858585;
    color: #fff;
    font-weight: bold;
}
.layouts .plus {
    width: 20px;
    font-size: 12px;
    color: #ddd;
}
.status {
    flex: 0 0 43%;
    display: flex;
    background: #4d4d4d;
    color: #fff;
}
.status button {
    width: 23px;
    font-weight: bold;
    font-size: 9px;
    background: #5b5b5b;
}
.status .on {
    background: #4a5663;
    width: 20px;
}

/* Input method bar */
.ime {
    position: absolute;
    top: 141px;
    right: 2px;
    display: flex;
    align-items: center;
    gap: 5px;
    width: 120px;
    height: 18px;
    padding-left: 3px;
    background: #fff;
    color: #111;
    font-family: "Noto Sans CJK SC", sans-serif;
    font-size: 13px;
    line-height: 16px;
}
.ime svg {
    width: 11px;
    height: 11px;
}
.ime b {
    font-weight: 900;
}
.ime-lang {
    font: bold 8px "Liberation Mono", monospace;
    margin-left: 2px;
}
.ime-py {
    font-size: 10px;
    line-height: 11px;
    border: 1px solid #555;
}

/* Dialog */
.dialog {
    position: absolute;
    left: 265px;
    top: 124px;
    width: 440px;
    background: #f0f0f0;
    border: 1px solid #999;
    color: #222;
    font-family: "Liberation Serif", "Noto Sans CJK SC", serif;
    font-size: 9px;
    line-height: 12px;
}
.dialog-title {
    display: flex;
    align-items: center;
    gap: 4px;
    height: 24px;
    padding: 0 5px 0 6px;
    background: #fff;
    font-family: "Open Sans", "Noto Sans CJK SC", sans-serif;
    font-size: 10px;
}
.dialog-title svg {
    width: 10px;
    height: 11px;
}
.dialog-title button {
    margin-left: auto;
}
.dialog-title button svg {
    width: 14px;
    height: 14px;
}
.dialog-tabs {
    display: flex;
    padding: 8px 4px 0;
}
.dialog-tabs button {
    height: 15px;
    padding: 0 4px;
    border: 1px solid #ddd;
    border-bottom: none;
    border-right: none;
}
.dialog-tabs .w1 {
    width: 34px;
    justify-content: flex-start;
}
.dialog-tabs .w2 {
    width: 32px;
    justify-content: flex-start;
}
.dialog-tabs .w3 {
    width: 34px;
}
.dialog-tabs .active {
    background: #fff;
    border-color: #fff;
}
.panel {
    display: grid;
    grid-template-columns: 212px 200px;
    gap: 7px;
    margin: 0 5px 0 4px;
    padding: 2px 4px 3px;
    background: #fff;
    border: 1px solid #ddd;
}
fieldset {
    min-width: 0;
    margin: 0;
    padding: 0;
    border: solid #ddd;
    border-width: 1px 0;
}
legend {
    padding: 0 2px;
    margin-left: 2px;
}
.linear {
    border-right-width: 1px;
    padding: 0 4px 3px 0;
}
.row {
    display: flex;
    align-items: center;
    justify-content: space-between;
    height: 21px;
    padding-left: 6px;
}
.row.off, .check.off {
    color: #999;
}
.row.off label {
    color: #444;
}
.row select {
    width: 113px;
    height: 14px;
    padding: 0 12px 0 3px;
    line-height: 12px;
    border: 1px solid #bbb;
    background: #e1e1e1 url("data:image/svg+xml,%3Csvg xmlns='http://www.w3.org/2000/svg' width='6' height='4'%3E%3Cpath d='M0 0l3 3 3-3' fill='none' stroke='%23555'/%3E%3C/svg%3E") no-repeat right 3px center;
}
.row select:disabled {
    background-color: #ccc;
    color: #999;
    opacity: 1;
}
.row.short select, .row.short .spin {
    width: 82px;
}
.row.long input {
    width: 122px;
    height: 15px;
    border: 1px solid #888;
}
.row.long .sides {
    border-width: 0 1px;
}
.spin {
    display: flex;
    height: 17px;
    border: 1px solid #999;
    border-left: none;
}
.spin input {
    flex: 1;
    min-width: 0;
    padding-left: 2px;
}
.spin > span {
    display: flex;
    flex-direction: column;
}
.spin button {
    flex: 1;
    width: 12px;
    border: 1px solid #ccc;
    background: #eee;
    font: 5px "DejaVu Sans", sans-serif;
    color: #111;
}
.spin.off {
    border-color: #ccc;
    color: #999;
}
.spin.off button {
    color: #777;
}
.sub {
    margin-right: 1px;
}
.sub .row {
    padding-left: 9px;
}
.scale .spin {
    width: 64px;
    margin-right: 11px;
}
.check {
    display: flex;
    align-items: center;
    gap: 3px;
    height: 20px;
}
.check input {
    appearance: none;
    width: 11px;
    height: 11px;
    flex: none;
    border: 1px solid #444;
    background: #fff;
}
.check input:checked {
    background: url("data:image/svg+xml,%3Csvg xmlns='http://www.w3.org/2000/svg' width='9' height='9'%3E%3Cpath d='M1 4l3 3 4-6' fill='none' stroke='%23222'/%3E%3C/svg%3E") no-repeat center;
}
.check input:disabled {
    border-color: #ccc;
}
.check.tight {
    height: 11px;
    margin: 0 0 4px 10px;
}
.zero-cols {
    display: grid;
    grid-template-columns: 116px 1fr;
    padding-left: 14px;
}
.zero-left .check {
    height: 16px;
}
.sub-field {
    display: grid;
    padding-left: 23px;
}
.sub-field label {
    white-space: nowrap;
}
.sub-field .spin {
    width: 64px;
    margin: 1px 0 3px;
    border-left: 1px solid #ccc;
}
.sub-field > input {
    width: 66px;
    height: 18px;
    margin: 2px 0 1px;
    border: 1px solid #bbb;
}
.zero-right {
    margin-top: -2px;
}
.right-col {
    padding-top: 5px;
}
.preview {
    display: block;
    width: 200px;
    height: 128px;
    background: #202830;
}
.dim-text {
    font: bold 9px "Liberation Sans", sans-serif;
    fill: #fff;
    text-anchor: middle;
}
.angle {
    margin-top: 55px;
    padding: 6px 0 4px;
}
.angle .row {
    height: 25px;
}
.angle select {
    width: 122px;
}
.angle .sub {
    padding: 4px 0 2px;
}
.angle .check {
    height: 14px;
    margin-left: 11px;
}
.dialog-foot {
    display: flex;
    gap: 17px;
    padding: 8px 0 7px 228px;
}
.dialog-foot button {
    width: 58px;
    height: 16px;
    background: #e1e1e1;
}
.dialog-foot .primary {
    border: 1px solid #3d8fd1;
}

/* Site mark */
.mark {
    position: absolute;
    left: 621px;
    top: 372px;
    right: 0;
    bottom: 0;
    display: flex;
    align-items: center;
    padding-left: 32px;
    background: #fff;
}
.mark svg {
    width: 102px;
    height: 84px;
}
.mark-text {
    display: flex;
    flex-direction: column;
    color: #111;
}
.mark strong {
    font: 900 41px/42px "Noto Sans CJK SC", sans-serif;
}
.mark em {
    font: italic 600 26px/28px "Open Sans", sans-serif;
}
```
